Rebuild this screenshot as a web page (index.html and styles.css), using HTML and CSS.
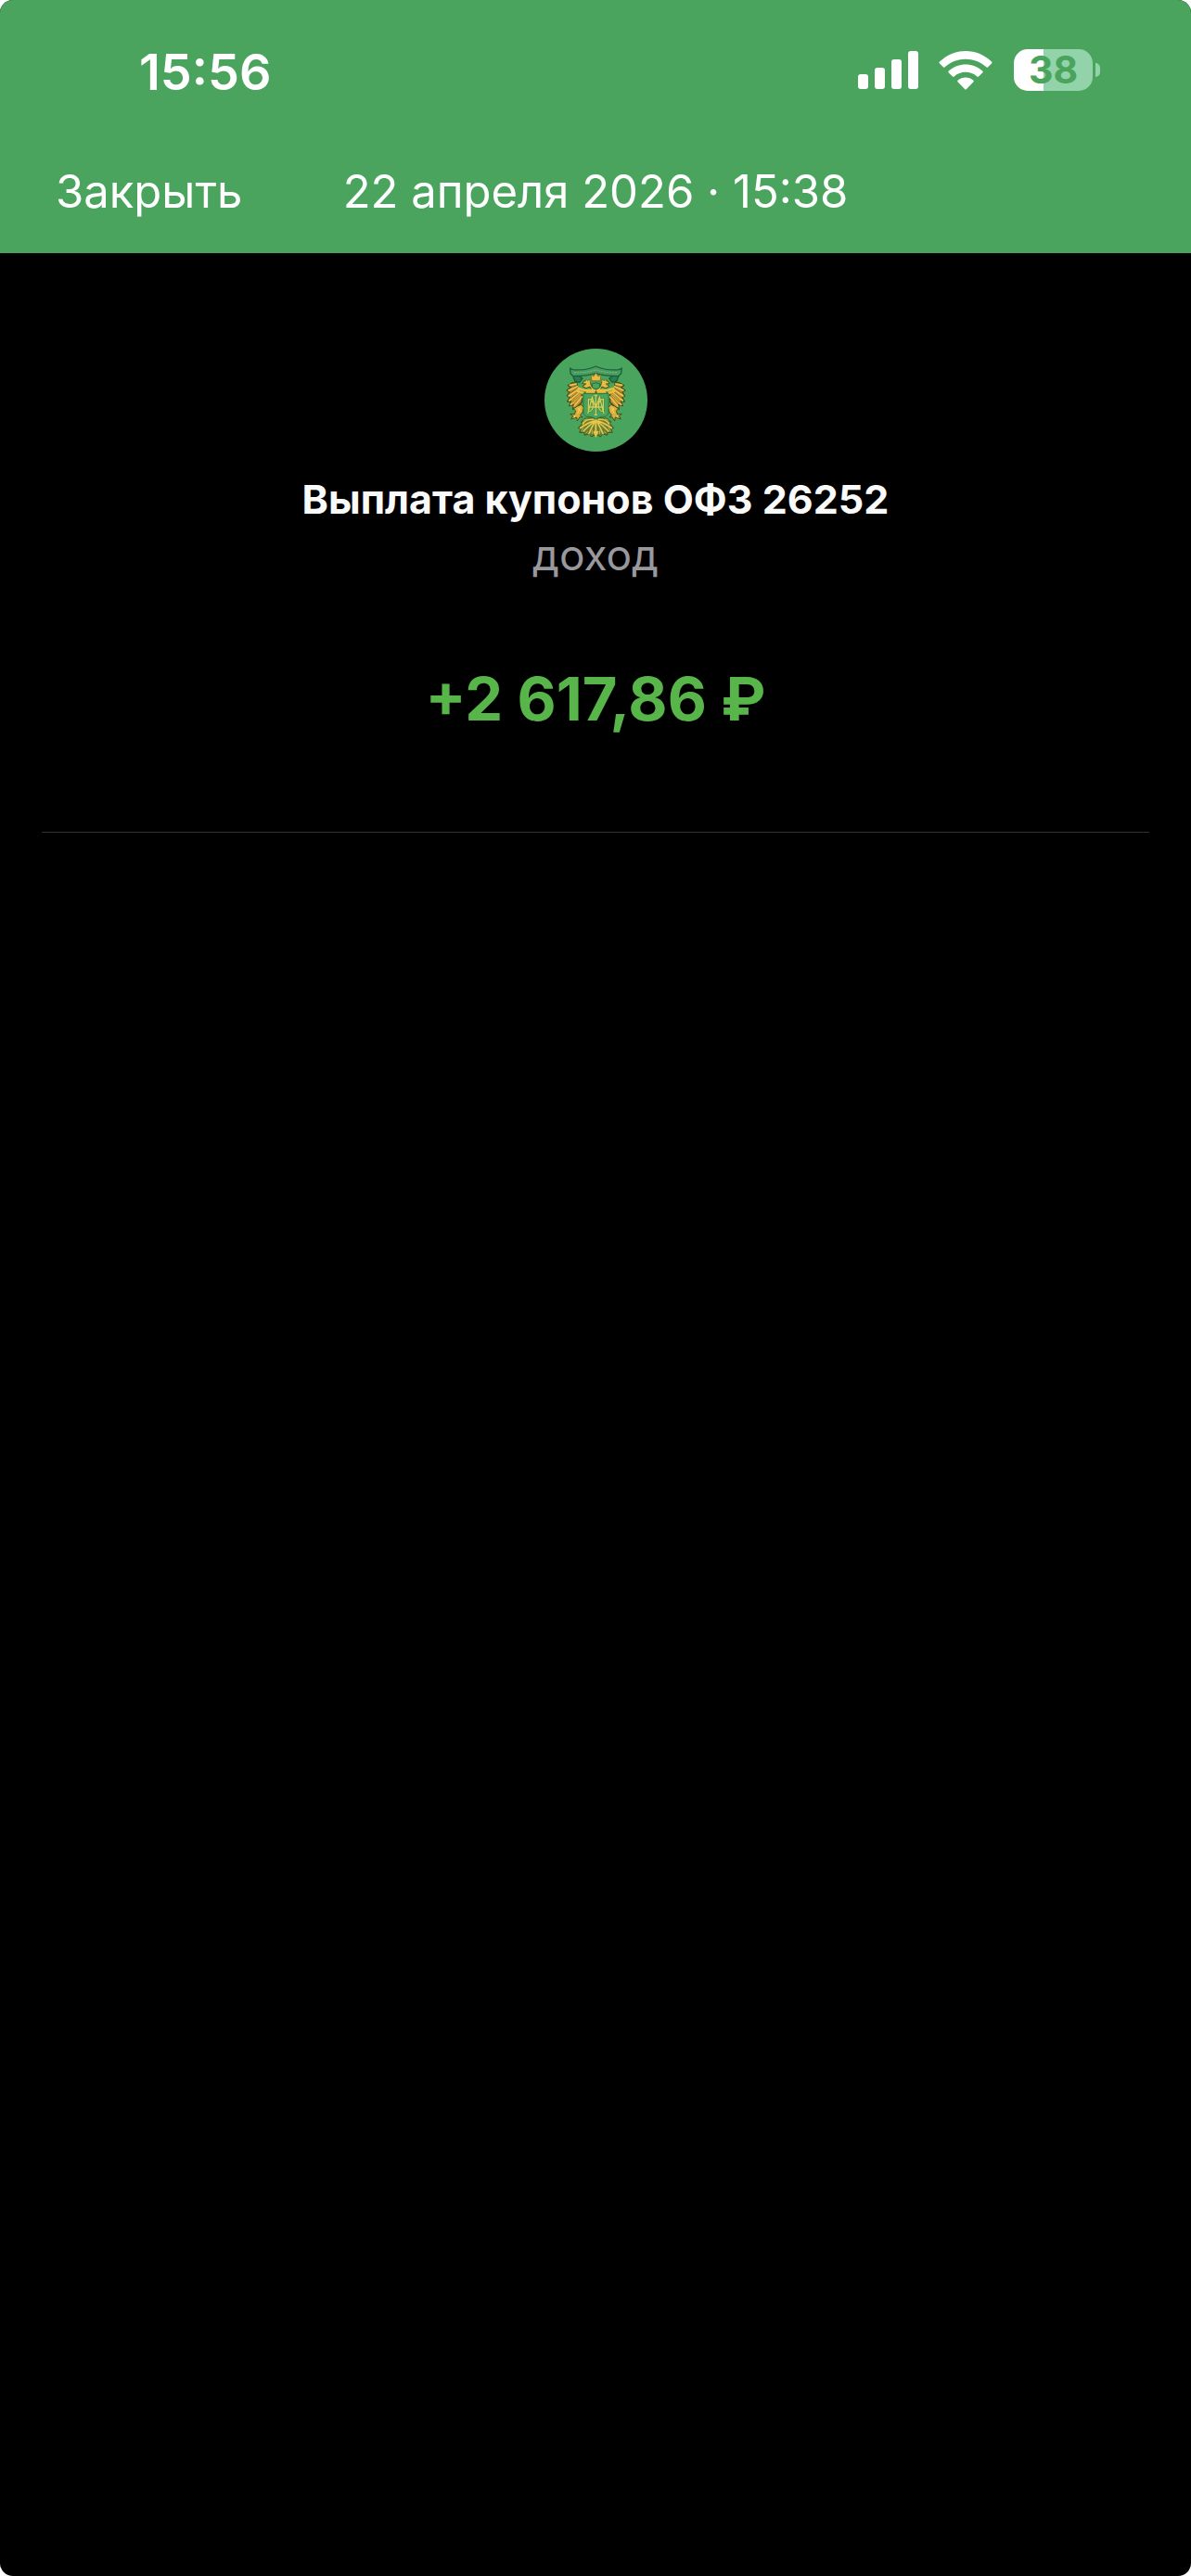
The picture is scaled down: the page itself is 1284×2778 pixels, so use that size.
FILE: index.html
```html
<!DOCTYPE html>
<html lang="ru">
<head>
  <meta charset="UTF-8">
  <meta name="viewport" content="width=device-width, initial-scale=1">
  <title>Выплата купонов</title>
  <link rel="stylesheet" href="styles.css">
</head>
<body>

<div class="screen">
  <!-- Header -->
  <header class="header">
    <div class="status-bar">
      <span class="time">15:56</span>
      <div class="status-icons">
        <svg class="signal" viewBox="0 0 65 41" aria-hidden="true">
          <rect x="0" y="25" width="11" height="16" rx="3"/>
          <rect x="18" y="18" width="11" height="23" rx="3"/>
          <rect x="36" y="9" width="11" height="32" rx="3"/>
          <rect x="54" y="0" width="11" height="41" rx="3"/>
        </svg>
        <svg class="wifi" viewBox="0 0 58 42" aria-hidden="true">
          <path d="M1 11.500C17-3.800 41-3.800 57 11.500C57.700 12.200 57.700 12.800 57 13.500L53.200 17.200C52.500 17.900 51.900 17.900 51.200 17.300C38.500 6 19.500 6 6.800 17.300C6.100 17.900 5.500 17.900 4.800 17.200L1 13.500C.3 12.800.3 12.200 1 11.500Z"/>
          <path d="M10.800 21.500C21 12 37 12 47.200 21.500C47.900 22.200 47.900 22.800 47.200 23.500L43.300 27.300C42.600 28 42 28 41.300 27.400C34.500 21.300 23.500 21.300 16.700 27.400C16 28 15.400 28 14.700 27.300L10.800 23.500C10.100 22.800 10.100 22.200 10.800 21.500Z"/>
          <path d="M20.800 31.500C25.300 27.500 32.700 27.500 37.200 31.500C38 32.200 38 32.800 37.300 33.500L30 41C29.300 41.700 28.700 41.700 28 41L20.700 33.500C20 32.800 20 32.200 20.800 31.500Z"/>
        </svg>
        <div class="battery">
          <span class="battery-level">38</span>
          <span class="battery-cap"></span>
        </div>
      </div>
    </div>
    <nav class="nav-bar">
      <button type="button" class="close-btn">Закрыть</button>
      <h1 class="date">22 апреля 2026 · 15:38</h1>
    </nav>
  </header>

  <!-- Operation details -->
  <main class="operation">
    <svg class="logo" viewBox="50 49 333 333" role="img" aria-label="Минфин">
      <circle cx="216.500" cy="215.500" r="166.500" fill="#49a55d"/>
      <!-- ribbon -->
      <g stroke="#17613a" stroke-width="4" stroke-linejoin="round">
        <path fill="#2d7d50" d="M141 133l20 4 12 8-10 13-15-4zM291 133l-20 4-12 8 10 13 15-4z"/>
        <path fill="#4a9b62" d="M133 112l8 5c30 3 52-1 75-11 23 10 45 14 75 11l9-5-2 17-9 9c-28 0-49-1-73-9-24 8-45 9-73 9l-9-9z"/>
      </g>
      <path d="M145 126c28 2 49-2 71-8 22 6 43 10 71 8" fill="none" stroke="#7dbb70" stroke-width="3" stroke-dasharray="6 3"/>
      <g id="half">
        <!-- head and neck -->
        <path d="M215 181c-10-4-15-11-16-22-5-6-13-9-21-5l-6 8 12 1-11 8 12 6 12-5 5 9-20 5v9h33z" fill="#e5bd40" stroke="#49501f" stroke-width="3" stroke-linejoin="round"/>
        <path d="M182 156l2-8 6 5 6-5 2 10" fill="#efc94b" stroke="#60611f" stroke-width="2"/>
        <!-- wing -->
        <path d="M155 159l-16 1-13 8 9 6-13 10 9 6-8 12 9 4-8 14 12 0-6 14 14-3-2 14 15-9 14-14v-31h-10l5-8-9-4z" fill="#bd8b32" stroke="#454e1d" stroke-width="4" stroke-linejoin="round"/>
        <path d="M153 163l-21 4M156 171l-28 13M158 181l-29 21M161 190l-31 27M165 198l-30 32M171 205l-25 30" stroke="#e9c54b" stroke-width="5" stroke-linecap="round"/>
        <path d="M153 169l-17 5M158 177l-25 16M161 187l-26 22M168 196l-29 28" stroke="#5b5b22" stroke-width="2"/>
        <path d="M176 193l-18-7 2-8 20 6 36-1" fill="none" stroke="#e9bf42" stroke-width="8"/>
        <!-- leg -->
        <path d="M156 235l12-5 10 10-6 17-7 7 8 7-9-1-8 13-2-12-18 6 6-10-9-7 14 2 4-11-7-8z" fill="#dbae3b" stroke="#454e1d" stroke-width="3" stroke-linejoin="round"/>
        <path d="M157 240l11 13M166 237l-9 22M149 264l-2 8" stroke="#f3d65d" stroke-width="3"/>
        <!-- tail -->
        <path d="M207 273l-27 2-13 12 5 4-13 15 9 3-5 11 15 0 2 9 14-4 8 9 14-8V277z" fill="#688033" stroke="#40531f" stroke-width="3" stroke-linejoin="round"/>
        <path d="M208 278c-18-2-28 4-34 14M207 284c-16 4-27 12-41 22M209 287c-12 8-22 18-33 29M212 288c-7 11-12 23-18 36" fill="none" stroke="#e7c64b" stroke-width="5" stroke-linecap="round"/>
        <path d="M188 276l-12 5M176 305l-8 12M190 316l-6 7M203 310l2 15" stroke="#a8b64b" stroke-width="3"/>
      </g>
      <use href="#half" transform="matrix(-1 0 0 1 433 0)"/>
      <path d="M216 281v48M209 288l7-10 8 10M210 316l6 14 7-14" fill="none" stroke="#e8c44a" stroke-width="6"/>
      <!-- main crown -->
      <path d="M203 153l-3-20 9 6 7-12 8 12 9-6-3 20z" fill="#eeb943" stroke="#725d20" stroke-width="2"/>
      <path d="M204 163q12-8 25 0v11q-11 12-25 0z" fill="#49a55d" stroke="#28693a" stroke-width="3"/>
      <!-- shield -->
      <path d="M176 194h81v65l-9 10q-22-2-32 9-10-11-31-9l-9-10z" fill="#49a55d" stroke="#347538" stroke-width="3"/>
      <g fill="none" stroke="#3d7f40" stroke-width="6">
        <path d="M216 200v62M192 212q15 0 15 20t-15 20v-40zM240 212q-15 0-15 20t15 20v-40zM190 259l14-53 12 35 12-35 14 53M197 238h38"/>
      </g>
      <g fill="none" stroke="#d3ce58" stroke-width="4">
        <path d="M216 200v62M211 200h10M211 263h10M192 212q15 0 15 20t-15 20v-40zM240 212q-15 0-15 20t15 20v-40zM190 259l14-53 12 35 12-35 14 53M197 238h38"/>
      </g>
    </svg>
    <h2 class="name">Выплата купонов ОФЗ 26252</h2>
    <p class="type">доход</p>
    <p class="amount">+2 617,86 ₽</p>
  </main>
</div>

</body>
</html>
```

FILE: styles.css
```css
* {
  margin: 0;
  padding: 0;
  box-sizing: border-box;
}
body {
  font-family: Inter, "Noto Sans", sans-serif;
  background-color: #fff;
}
.screen {
  min-height: 100vh;
  background-color: #000;
  border-radius: 14px;
  overflow: hidden;
}

/* Header */
.header {
  background-color: #4aa45d;
  color: #fff;
}
.status-bar {
  display: flex;
  align-items: center;
  justify-content: space-between;
  height: 151px;
  padding: 0 106px 0 150px;
}
.time {
  padding-top: 4px;
  font-size: 54px;
  line-height: 60px;
  font-weight: 600;
}
.status-icons {
  display: flex;
  align-items: center;
}
.status-icons svg {
  fill: #fff;
}
.signal {
  width: 65px;
  height: 41px;
  margin-right: 22px;
}
.wifi {
  width: 58px;
  height: 42px;
  margin-right: 23px;
}
.battery {
  position: relative;
  width: 85px;
  height: 45px;
  border-radius: 15px;
  background: linear-gradient(to right, #fff 32px, #92d3a9 32px);
  text-align: center;
}
.battery-level {
  color: #4aa45d;
  font-size: 41px;
  line-height: 45px;
  font-weight: 700;
}
.battery-cap {
  position: absolute;
  top: 15px;
  right: -8px;
  width: 5px;
  height: 15px;
  border-radius: 0 8px 8px 0;
  background-color: #92d3a9;
}
.nav-bar {
  display: grid;
  grid-template-columns: 1fr auto 1fr;
  align-items: center;
  height: 122px;
  padding: 0 60px 10px;
}
.close-btn {
  justify-self: start;
  background: none;
  border: none;
  color: #fff;
  font-family: inherit;
  font-size: 49px;
  line-height: 60px;
  cursor: pointer;
}
.date {
  font-size: 49px;
  line-height: 60px;
  font-weight: 400;
}

/* Operation details */
.operation {
  display: flex;
  flex-direction: column;
  align-items: center;
  margin: 0 45px;
  padding: 103px 0 101px;
  border-bottom: 1px solid #323234;
  text-align: center;
}
.logo {
  width: 111px;
  height: 111px;
}
.name {
  margin-top: 21px;
  color: #fafafa;
  font-size: 43px;
  line-height: 60px;
  font-weight: 700;
}
.type {
  color: #98989d;
  font-size: 46px;
  line-height: 60px;
}
.amount {
  margin-top: 84px;
  color: #57b549;
  font-size: 65px;
  line-height: 84px;
  font-weight: 700;
}
```
